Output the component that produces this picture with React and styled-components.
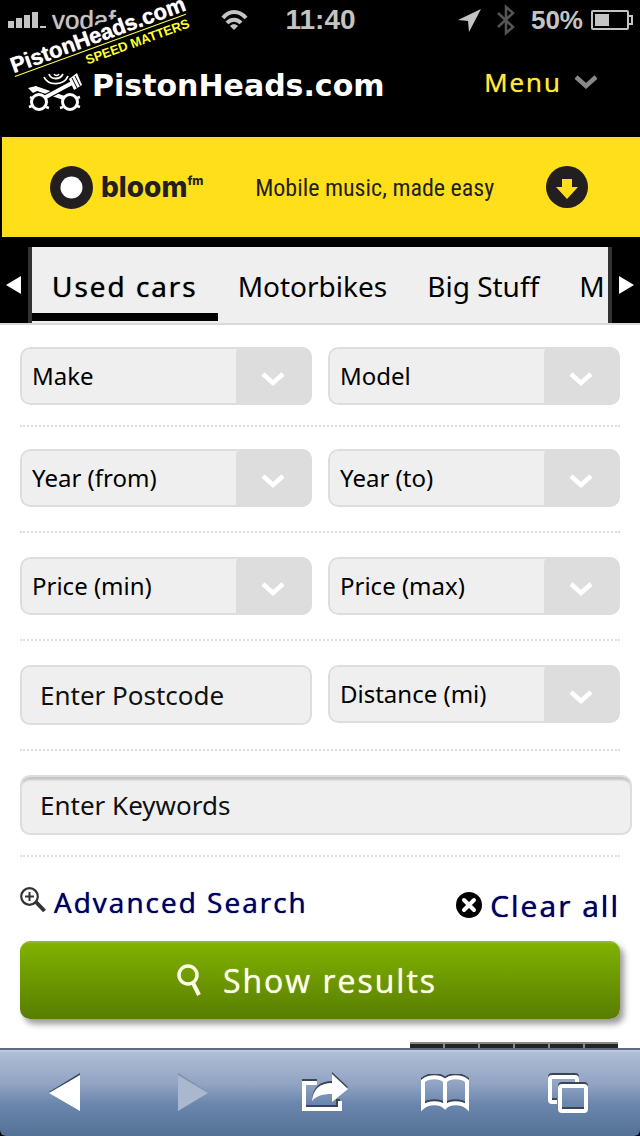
// * : libraries
import React, { useState } from 'react';
import styled, { ThemeProvider, createGlobalStyle } from 'styled-components';

// * : styles
const theme = {
  defaultFont: `'Noto Sans', 'Open Sans', sans-serif`,
  headingFont: `'Open Sans', 'Noto Sans', sans-serif`,
  systemFont: `'Liberation Sans', Arial, sans-serif`,
  narrowFont: `'Liberation Sans Narrow', 'Roboto Condensed', 'Liberation Sans', sans-serif`,
  brandFont: `'DejaVu Sans', sans-serif`,
  yellow: '#ffdf19',
  field: '#efefef',
  line: '#dddddd',
  link: '#00005f',
};

const GlobalStyle = createGlobalStyle`
  *, *::before, *::after { box-sizing: border-box; }
  body {
    margin: 0;
    background: #000;
    color: #000;
    overflow-x: hidden;
  }
  button, input, select { font: inherit; color: inherit; margin: 0; }
  svg { display: block; flex: none; }
`;

const Page = styled.div`
  min-height: 100vh;
  display: flex;
  flex-direction: column;
  position: relative;
  overflow: hidden;
  font-family: ${(props) => props.theme.defaultFont};
`;

// status bar
const StatusBar = styled.div`
  display: grid;
  grid-template-columns: 1fr auto 1fr;
  align-items: center;
  height: 40px;
  padding: 0 7px 0 8px;
  color: #c4c4c4;
  font-family: ${(props) => props.theme.systemFont};
  font-size: 26px;
  font-weight: bold;
  line-height: 32px;
`;
const StatusGroup = styled.div`
  display: flex;
  align-items: center;
  justify-content: ${(props) => (props.$end ? 'flex-end' : 'flex-start')};
  gap: ${(props) => (props.$end ? '8px' : '6px')};
`;
const Carrier = styled.span`
  width: 162px;
  font-weight: normal;
  text-shadow: 0 0 1px currentColor;
`;
const Clock = styled.span`
  font-size: 28px;
`;
const Bluetooth = styled.svg`
  margin: 0 8px;
`;

// rotated mark over the top left corner
const Watermark = styled.div`
  position: absolute;
  top: 77px;
  left: 15px;
  transform: rotate(-20deg);
  transform-origin: 0 0;
`;
const WatermarkInner = styled.div`
  position: absolute;
  left: 0;
  bottom: -18px;
  width: 182px;
  white-space: nowrap;
`;
const WatermarkName = styled.div`
  border-bottom: 1px solid #ffff50;
  background: #000;
  color: #fff;
  font-family: ${(props) => props.theme.systemFont};
  font-size: 22px;
  line-height: 20px;
  font-weight: bold;
  text-shadow: 0 0 1px currentColor;
`;
const WatermarkTag = styled.div`
  color: #ffff30;
  font-family: ${(props) => props.theme.systemFont};
  font-size: 13px;
  line-height: 18px;
  font-weight: bold;
  text-align: right;
`;

// site header
const Header = styled.header`
  display: flex;
  align-items: flex-start;
  height: 97px;
  padding: 24px 42px 0 26px;
`;
const Brand = styled.a`
  display: flex;
  align-items: flex-start;
  gap: 8px;
  padding-top: 6px;
  color: #fff;
  text-decoration: none;
  font-family: ${(props) => props.theme.brandFont};
  font-size: 30px;
  line-height: 32px;
  font-weight: bold;
`;
const MenuButton = styled.button`
  display: flex;
  align-items: center;
  gap: 12px;
  margin-left: auto;
  padding: 0;
  border: 0;
  background: none;
  color: #ffe936;
  font-family: ${(props) => props.theme.headingFont};
  font-size: 26px;
  line-height: 36px;
  letter-spacing: 2px;
  text-shadow: 0 0 1px currentColor;
`;

// advert
const Banner = styled.a`
  display: flex;
  align-items: center;
  height: 100px;
  margin-left: 2px;
  padding: 0 52px 0 48px;
  background: ${(props) => props.theme.yellow};
  color: #231f20;
  text-decoration: none;
`;
const BannerName = styled.span`
  display: flex;
  align-items: flex-start;
  margin-left: 8px;
  font-family: 'Inter', sans-serif;
  font-size: 28px;
  line-height: 36px;
  font-weight: 800;
`;
const BannerSuffix = styled.sup`
  font-size: 12px;
  line-height: 24px;
`;
const BannerText = styled.span`
  flex: 1;
  padding-top: 2px;
  text-align: center;
  font-family: ${(props) => props.theme.narrowFont};
  font-size: 24px;
  line-height: 36px;
`;

// category tabs
const TabBar = styled.nav`
  display: flex;
  height: 88px;
  padding-top: 10px;
  border-bottom: 2px solid #d9d9d9;
`;
const TabArrow = styled.button`
  display: flex;
  align-items: center;
  justify-content: center;
  flex: none;
  width: 32px;
  padding: 0;
  border: solid #333;
  border-width: ${(props) => (props.$next ? '0 0 0 4px' : '0 4px 0 0')};
  background: #000;
`;
const TabList = styled.div`
  display: flex;
  flex: 1;
  min-width: 0;
  overflow: hidden;
  background: ${(props) => props.theme.field};
`;
const Tab = styled.button`
  flex: none;
  padding: 12px 20px 0;
  border: 0;
  border-bottom: 8px solid ${(props) => (props.$active ? '#000' : 'transparent')};
  margin-bottom: 2px;
  background: none;
  font-family: ${(props) => (props.$active ? props.theme.headingFont : 'inherit')};
  font-size: 28px;
  line-height: 38px;
  letter-spacing: ${(props) => (props.$active ? '2px' : 'normal')};
  text-shadow: ${(props) => (props.$active ? '0 0 1px currentColor' : 'none')};
`;

// search form
const Form = styled.form`
  flex: 1;
  display: flex;
  flex-direction: column;
  padding: 0 20px;
  background: #fff;
`;
const Row = styled.div`
  display: grid;
  grid-template-columns: ${(props) => (props.$single ? '1fr' : '1fr 1fr')};
  gap: 16px;
  align-items: start;
  padding-top: ${(props) => (props.$tightTop ? '22px' : '24px')};
  padding-bottom: ${(props) => (props.$tightBottom ? '20px' : '24px')};
  border-bottom: 2px dotted ${(props) => props.theme.line};
`;
const SelectBox = styled.div`
  display: grid;
  grid-template-columns: 1fr 76px;
  height: 58px;
  border-radius: 10px;
  overflow: hidden;
`;
const Select = styled.select`
  grid-area: 1 / 1 / 2 / 3;
  appearance: none;
  width: 100%;
  padding: 0 76px 2px 10px;
  border: 2px solid ${(props) => props.theme.line};
  border-radius: 10px;
  background: ${(props) => props.theme.field};
  font-size: 24px;
`;
const SelectArrow = styled.span`
  grid-area: 1 / 2;
  display: flex;
  align-items: center;
  justify-content: center;
  padding: 6px 2px 0 0;
  background: ${(props) => props.theme.line};
  border-radius: 6px 0 0 0;
  pointer-events: none;
`;
const TextInput = styled.input`
  min-width: 0;
  height: 60px;
  padding: 0 18px;
  border: 2px solid ${(props) => props.theme.line};
  border-radius: 10px;
  background: ${(props) => props.theme.field};
  font-size: 26px;
  &::placeholder {
    color: #111;
    opacity: 1;
  }
`;
const KeywordInput = styled(TextInput)`
  margin-right: -12px;
  box-shadow: inset 0 5px 2px -2px #c4c4c4;
`;
const Actions = styled.div`
  display: flex;
  justify-content: space-between;
  align-items: flex-start;
  height: 84px;
  padding-top: 26px;
`;
const AdvancedLink = styled.a`
  display: flex;
  gap: 8px;
  color: ${(props) => props.theme.link};
  text-decoration: none;
  font-family: ${(props) => props.theme.headingFont};
  font-size: 28px;
  line-height: 38px;
  letter-spacing: 2px;
  text-shadow: 0 0 1px currentColor;
`;
const ClearButton = styled.button`
  display: flex;
  align-items: center;
  gap: 8px;
  padding: 0;
  border: 0;
  background: none;
  color: ${(props) => props.theme.link};
  font-family: ${(props) => props.theme.headingFont};
  font-size: 30px;
  line-height: 46px;
  letter-spacing: 2px;
  text-shadow: 0 0 1px currentColor;
`;
const SubmitButton = styled.button`
  display: flex;
  align-items: center;
  justify-content: center;
  gap: 20px;
  height: 78px;
  padding: 0 26px 0 0;
  border: 0;
  border-top: 2px solid #8fb92c;
  border-radius: 10px;
  background: linear-gradient(#80b200, #587d00);
  box-shadow: 4px 5px 6px rgba(0, 0, 0, 0.4);
  color: #fbffe8;
  font-family: ${(props) => props.theme.headingFont};
  font-size: 32px;
  line-height: 44px;
  letter-spacing: 2px;
  text-shadow: 0 0 1px currentColor;
`;
const Strip = styled.div`
  display: grid;
  grid-template-columns: repeat(6, 1fr);
  gap: 2px;
  align-self: flex-end;
  width: 208px;
  height: 6px;
  margin: auto 2px 0 0;
  border-top: 2px solid #8a8c88;
  background: #8a8c88;
`;
const StripCell = styled.span`
  background: #222624;
`;

// browser toolbar
const Toolbar = styled.nav`
  display: grid;
  grid-template-columns: 130fr 126fr 138fr 102fr 144fr;
  height: 88px;
  border-top: 2px solid #5d6b85;
  background: linear-gradient(#c3cfe0 0, #aebdd3 3px, #90a3c2 40%, #6c87ae 62%, #537194 100%);
  border-radius: 0 0 6px 6px;
`;
const ToolButton = styled.button`
  display: flex;
  align-items: center;
  justify-content: center;
  padding: 0;
  border: 0;
  background: none;
`;

// * : components
const selectRows = [
  { fields: ['Make', 'Model'], tightTop: true, tightBottom: true },
  { fields: ['Year (from)', 'Year (to)'], tightTop: true },
  { fields: ['Price (min)', 'Price (max)'] },
];
const tabs = ['Used cars', 'Motorbikes', 'Big Stuff', 'M'];

function Chevron({ color }) {
  return (
    <svg width="24" height="14" viewBox="0 0 24 14" fill="none" aria-hidden="true">
      <path d="M2 2 12 11 22 2" stroke={color} strokeWidth="4.5" />
    </svg>
  );
}

function SelectField({ label }) {
  return (
    <SelectBox>
      <Select aria-label={label}>
        <option>{label}</option>
      </Select>
      <SelectArrow>
        <Chevron color="#fff" />
      </SelectArrow>
    </SelectBox>
  );
}

function Status() {
  return (
    <StatusBar>
      <StatusGroup>
        <svg width="38" height="18" viewBox="0 0 38 18" fill="#c4c4c4" aria-hidden="true">
          <path d="M0 10h6v7H0zM8 7h6v10H8zM16 4h6v13h-6zM24 1h6v16h-6zM32 15h6v2h-6z" />
        </svg>
        <Carrier>vodaf</Carrier>
        <svg width="28" height="22" viewBox="0 0 28 22" fill="none" stroke="#c4c4c4" strokeWidth="4" aria-hidden="true">
          <path d="M3 9C9 1 19 1 26 9M7 14c4-4.500 10-4.500 14 0" />
          <path d="m14 21-4-4c2-2.500 6-2.500 8 0z" fill="#c4c4c4" stroke="none" />
        </svg>
      </StatusGroup>
      <Clock>11:40</Clock>
      <StatusGroup $end>
        <svg width="24" height="24" viewBox="0 0 24 24" fill="#c4c4c4" aria-hidden="true">
          <path d="M24 1 12 24 11 13 1 12z" />
        </svg>
        <Bluetooth width="18" height="32" viewBox="0 0 18 32" fill="none" stroke="#555" strokeWidth="2.500" aria-hidden="true">
          <path d="m1 9 15 14-7 6V3l7 6L1 23" />
        </Bluetooth>
        <span>50%</span>
        <svg width="42" height="20" viewBox="0 0 42 20" fill="none" stroke="#c4c4c4" strokeWidth="2" aria-hidden="true">
          <rect x="1" y="1" width="36" height="18" rx="1" />
          <path d="M37 6h4v8h-4" />
          <path d="M4 4h14v12H4z" fill="#c4c4c4" stroke="none" />
        </svg>
      </StatusGroup>
    </StatusBar>
  );
}

function PistonIcon() {
  return (
    <svg width="58" height="42" viewBox="0 0 58 42" fill="none" stroke="#fff" aria-hidden="true">
      <path d="M23 4c2 6 11 6 14 0M18 7c4 9 20 9 24-1" strokeWidth="1.800" />
      <path d="M28 4c1 2 4 2 5 0" strokeWidth="1.500" />
      <path d="M38 28 9 18" strokeWidth="4" />
      <path d="M18 28 46 13" stroke="#000" strokeWidth="6" />
      <path d="M18 28 46 13" strokeWidth="4" />
      <path d="m43 9 8-6 5 12-8 5z" fill="#fff" stroke="none" />
      <path d="m46 8 5 10M49 6l5 10" stroke="#000" strokeWidth="1" />
      <path d="m2 18 8-2 3 4-6 3z" fill="#fff" stroke="none" />
      <circle cx="13" cy="32" r="7.500" fill="#000" strokeWidth="3" />
      <circle cx="44" cy="32" r="7.500" fill="#000" strokeWidth="3" />
      <path d="m4 27 2 1M3 37l3-1M20 37l3 1M34 38l3-1M51 28l3-1M51 36l3 1" strokeWidth="2.500" />
    </svg>
  );
}

function BrowserToolbar() {
  return (
    <Toolbar aria-label="Browser">
      <ToolButton aria-label="Back">
        <svg width="32" height="40" viewBox="0 0 32 40">
          <path d="M0 19 31 0v37z" fill="#3a4557" />
          <path d="M0 20 31 2v36z" fill="#fff" />
        </svg>
      </ToolButton>
      <ToolButton aria-label="Forward">
        <svg width="32" height="40" viewBox="0 0 32 40">
          <path d="M1 0 31 19 1 37z" fill="#8191ab" />
          <path d="M1 2 31 20 1 38z" fill="#a9b8ce" />
        </svg>
      </ToolButton>
      <ToolButton aria-label="Share">
        <svg width="48" height="42" viewBox="0 0 48 42" fill="none">
          <g transform="translate(0 -2)" stroke="#3a4557" strokeWidth="4">
            <path d="M16 11H3v26h34v-8" />
            <path d="M11 29c1-12 8-18 20-18V2l16 15-16 13v-8c-8 0-15 1-20 7z" fill="#3a4557" stroke="none" />
          </g>
          <path d="M16 11H3v26h36v-8" stroke="#fff" strokeWidth="4" />
          <path d="M11 29c1-12 8-18 20-18V2l16 15-16 13v-8c-8 0-15 1-20 7z" fill="#fff" />
        </svg>
      </ToolButton>
      <ToolButton aria-label="Bookmarks">
        <svg width="50" height="38" viewBox="0 0 50 38" fill="none" strokeWidth="4">
          <path d="M3 33V7c6-5 17-5 22 0 5-5 16-5 22 0v26c-6-5-17-5-22 0-5-5-16-5-22 0zM25 7v26" stroke="#3a4557" transform="translate(0 -2)" />
          <path d="M3 33V7c6-5 17-5 22 0 5-5 16-5 22 0v26c-6-5-17-5-22 0-5-5-16-5-22 0zM25 7v26" stroke="#fff" />
        </svg>
      </ToolButton>
      <ToolButton aria-label="Pages">
        <svg width="42" height="40" viewBox="0 0 42 40" fill="none" strokeWidth="4">
          <path d="M10 29H5a2 2 0 0 1-2-2V6a2 2 0 0 1 2-2h23a2 2 0 0 1 2 2v4" stroke="#3a4557" transform="translate(0 -2)" />
          <path d="M10 29H5a2 2 0 0 1-2-2V6a2 2 0 0 1 2-2h23a2 2 0 0 1 2 2v4" stroke="#fff" />
          <rect x="13" y="11" width="26" height="25" rx="2" stroke="#3a4557" />
          <rect x="13" y="13" width="26" height="25" rx="2" stroke="#fff" />
        </svg>
      </ToolButton>
    </Toolbar>
  );
}

function App() {
  const [active, setActive] = useState(tabs[0]);

  return (
    <ThemeProvider theme={theme}>
      <GlobalStyle />
      <Page>
        <Status />
        <Header>
          <Brand href="#home">
            <PistonIcon />
            PistonHeads.com
          </Brand>
          <MenuButton type="button">
            Menu
            <Chevron color="#888" />
          </MenuButton>
        </Header>
        <Watermark>
          <WatermarkInner>
            <WatermarkName>PistonHeads.com</WatermarkName>
            <WatermarkTag>SPEED MATTERS</WatermarkTag>
          </WatermarkInner>
        </Watermark>

        <Banner href="#advert">
          <svg width="43" height="43" viewBox="0 0 43 43" aria-hidden="true">
            <circle cx="21.500" cy="21.500" r="21.500" fill="#231f20" />
            <circle cx="21.500" cy="21.500" r="11" fill="#fff" />
          </svg>
          <BannerName>
            bloom<BannerSuffix>fm</BannerSuffix>
          </BannerName>
          <BannerText>Mobile music, made easy</BannerText>
          <svg width="42" height="42" viewBox="0 0 42 42" aria-hidden="true">
            <circle cx="21" cy="21" r="21" fill="#231f20" />
            <path d="M16 13h10v8h6L21 33 10 21h6z" fill="#ffdf19" />
          </svg>
        </Banner>

        <TabBar>
          <TabArrow type="button" aria-label="Previous">
            <svg width="16" height="20" viewBox="0 0 16 20" fill="#fff">
              <path d="M0 10 15 1v18z" />
            </svg>
          </TabArrow>
          <TabList>
            {tabs.map((tab) => (
              <Tab
                key={tab}
                type="button"
                $active={tab === active}
                onClick={() => setActive(tab)}
              >
                {tab}
              </Tab>
            ))}
          </TabList>
          <TabArrow type="button" aria-label="Next" $next>
            <svg width="16" height="20" viewBox="0 0 16 20" fill="#fff">
              <path d="M16 10 1 1v18z" />
            </svg>
          </TabArrow>
        </TabBar>

        <Form onSubmit={(e) => e.preventDefault()}>
          {selectRows.map((row) => (
            <Row
              key={row.fields[0]}
              $tightTop={row.tightTop}
              $tightBottom={row.tightBottom}
            >
              {row.fields.map((label) => (
                <SelectField key={label} label={label} />
              ))}
            </Row>
          ))}
          <Row>
            <TextInput aria-label="Postcode" placeholder="Enter Postcode" />
            <SelectField label="Distance (mi)" />
          </Row>
          <Row $single $tightBottom>
            <KeywordInput aria-label="Keywords" placeholder="Enter Keywords" />
          </Row>
          <Actions>
            <AdvancedLink href="#advanced">
              <svg width="26" height="32" viewBox="0 0 26 32" fill="none" stroke="#333" aria-hidden="true">
                <circle cx="9.500" cy="13.500" r="8.300" strokeWidth="2.200" />
                <path d="M5 13.500h9M9.500 9v9" strokeWidth="2" />
                <path d="m16 19 8.500 9" strokeWidth="4" />
              </svg>
              Advanced Search
            </AdvancedLink>
            <ClearButton type="reset">
              <svg width="26" height="28" viewBox="0 0 26 28" aria-hidden="true">
                <circle cx="13" cy="13" r="13" fill="#000" />
                <path d="m8 8 10 10M18 8 8 18" stroke="#fff" strokeWidth="4" strokeLinecap="round" />
              </svg>
              Clear all
            </ClearButton>
          </Actions>
          <SubmitButton type="submit">
            <svg width="26" height="34" viewBox="0 0 26 34" fill="none" stroke="#fbffe8" aria-hidden="true">
              <circle cx="11" cy="11" r="9" strokeWidth="3.500" />
              <path d="m16 19 6 12" strokeWidth="4" />
            </svg>
            Show results
          </SubmitButton>
          <Strip>
            {[1, 2, 3, 4, 5, 6].map((n) => (
              <StripCell key={n} />
            ))}
          </Strip>
        </Form>
        <BrowserToolbar />
      </Page>
    </ThemeProvider>
  );
}

export default App;
